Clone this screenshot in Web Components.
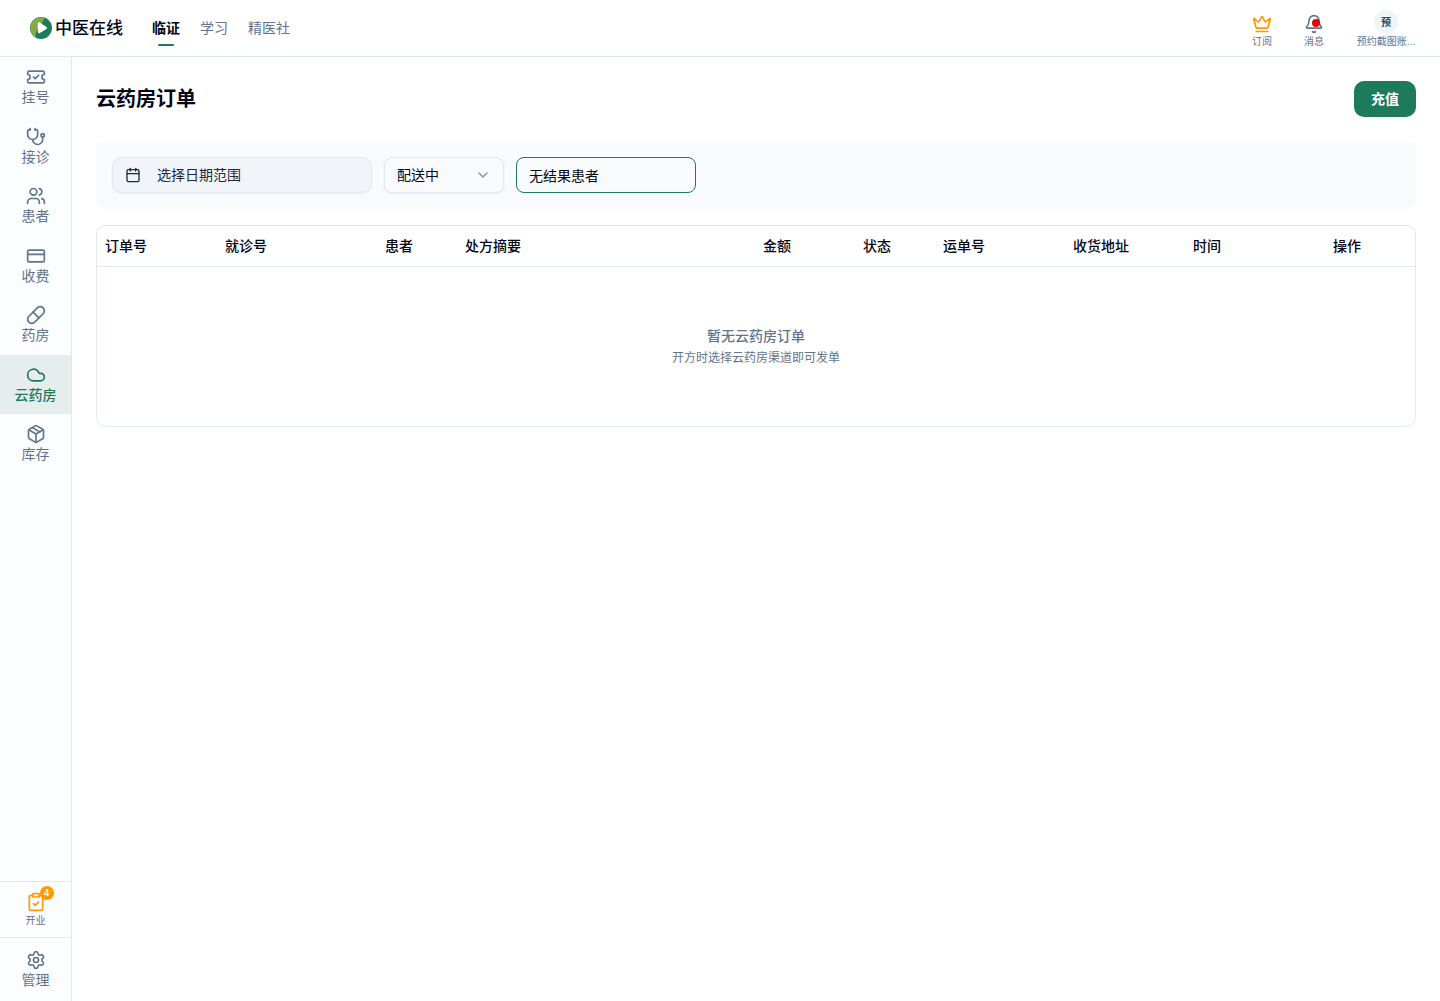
<!DOCTYPE html>
<html lang="zh-CN">
<head>
<meta charset="utf-8">
<meta name="viewport" content="width=device-width, initial-scale=1">
<title>云药房订单</title>
<style>
:root {
    --text: #020618;
    --muted: #62748e;
    --line: #e2e8f0;
    --panel: #f8fafc;
    --field: #f1f5f9;
    --side: #fbfdfe;
    --green: #1d7a5a;
    --orange: #fe9a00;
}

body {
    margin: 0;
    background: #fff;
    color: var(--text);
    font-family: Inter, "Noto Sans CJK SC", sans-serif;
    font-size: 14px;
    line-height: 20px;
}
</style>
</head>
<body>

<app-shell>
    <app-header slot="header">
        <nav-link active>临证</nav-link>
        <nav-link>学习</nav-link>
        <nav-link>精医社</nav-link>
        <header-tool slot="tools" label="订阅"><app-icon name="crown" style="color: var(--orange)"></app-icon></header-tool>
        <header-tool slot="tools" label="消息" dot><app-icon name="bell"></app-icon></header-tool>
        <header-tool slot="tools" label="预约截图账…" wide><user-avatar>预</user-avatar></header-tool>
    </app-header>

    <side-bar slot="side">
        <side-item icon="ticket">挂号</side-item>
        <side-item icon="stethoscope">接诊</side-item>
        <side-item icon="users">患者</side-item>
        <side-item icon="card">收费</side-item>
        <side-item icon="pill">药房</side-item>
        <side-item icon="cloud" active>云药房</side-item>
        <side-item icon="package">库存</side-item>
        <side-item slot="bottom" icon="clipboard" badge="4" small>开业</side-item>
        <side-item slot="bottom" icon="settings">管理</side-item>
    </side-bar>

    <page-title heading="云药房订单">
        <primary-button>充值</primary-button>
    </page-title>
    <filter-bar>
        <date-range>选择日期范围</date-range>
        <status-select></status-select>
        <search-input value="无结果患者"></search-input>
    </filter-bar>
    <order-table>
        <span slot="empty-title">暂无云药房订单</span>
        <span slot="empty-hint">开方时选择云药房渠道即可发单</span>
    </order-table>
</app-shell>

<script>
const ICONS = {
    crown: `<path d="M11.562 3.266a.5.5 0 0 1 .876 0L15.39 8.87a1 1 0 0 0 1.516.294L21.183 5.5a.5.5 0 0 1 .798.519l-2.834 10.246a1 1 0 0 1-.956.734H5.81a1 1 0 0 1-.957-.734L2.02 6.02a.5.5 0 0 1 .798-.519l4.276 3.664a1 1 0 0 0 1.516-.294z"/><path d="M5 21h14"/>`,
    bell: `<path d="M10.268 21a2 2 0 0 0 3.464 0"/><path d="M3.262 15.326A1 1 0 0 0 4 17h16a1 1 0 0 0 .74-1.673C19.41 13.956 18 12.499 18 8A6 6 0 0 0 6 8c0 4.499-1.411 5.956-2.738 7.326"/>`,
    ticket: `<path d="M2 9a3 3 0 0 1 0 6v2a2 2 0 0 0 2 2h16a2 2 0 0 0 2-2v-2a3 3 0 0 1 0-6V7a2 2 0 0 0-2-2H4a2 2 0 0 0-2 2Z"/><path d="m9 12 2 2 4-4"/>`,
    stethoscope: `<path d="M11 2v2"/><path d="M5 2v2"/><path d="M5 3H4a2 2 0 0 0-2 2v4a6 6 0 0 0 12 0V5a2 2 0 0 0-2-2h-1"/><path d="M8 15a6 6 0 0 0 12 0v-3"/><circle cx="20" cy="10" r="2"/>`,
    users: `<path d="M16 21v-2a4 4 0 0 0-4-4H6a4 4 0 0 0-4 4v2"/><path d="M16 3.128a4 4 0 0 1 0 7.744"/><path d="M22 21v-2a4 4 0 0 0-3-3.87"/><circle cx="9" cy="7" r="4"/>`,
    card: `<rect width="20" height="14" x="2" y="5" rx="2"/><path d="M2 10h20"/>`,
    pill: `<path d="m10.5 20.5 10-10a4.95 4.95 0 1 0-7-7l-10 10a4.95 4.95 0 1 0 7 7Z"/><path d="m8.5 8.5 7 7"/>`,
    cloud: `<path d="M17.5 19H9a7 7 0 1 1 6.71-9h1.79a4.5 4.5 0 1 1 0 9Z"/>`,
    package: `<path d="M11 21.73a2 2 0 0 0 2 0l7-4A2 2 0 0 0 21 16V8a2 2 0 0 0-1-1.73l-7-4a2 2 0 0 0-2 0l-7 4A2 2 0 0 0 3 8v8a2 2 0 0 0 1 1.73z"/><path d="M12 22V12"/><path d="M3.29 7 12 12l8.71-5"/><path d="m7.5 4.27 9 5.15"/>`,
    clipboard: `<rect width="8" height="4" x="8" y="2" rx="1"/><path d="M16 4h2a2 2 0 0 1 2 2v14a2 2 0 0 1-2 2H6a2 2 0 0 1-2-2V6a2 2 0 0 1 2-2h2"/><path d="m9 14 2 2 4-4"/>`,
    settings: `<path d="M9.671 4.136a2.34 2.34 0 0 1 4.659 0 2.34 2.34 0 0 0 3.319 1.915 2.34 2.34 0 0 1 2.33 4.033 2.34 2.34 0 0 0 0 3.831 2.34 2.34 0 0 1-2.33 4.033 2.34 2.34 0 0 0-3.319 1.915 2.34 2.34 0 0 1-4.659 0 2.34 2.34 0 0 0-3.32-1.915 2.34 2.34 0 0 1-2.33-4.033 2.34 2.34 0 0 0 0-3.831A2.34 2.34 0 0 1 6.35 6.051a2.34 2.34 0 0 0 3.319-1.915"/><circle cx="12" cy="12" r="3"/>`,
    calendar: `<path d="M8 2v4"/><path d="M16 2v4"/><rect width="18" height="18" x="3" y="4" rx="2"/><path d="M3 10h18"/>`,
    chevron: `<path d="m6 9 6 6 6-6"/>`
};

// Small base class: every element renders once into an open root
class BaseElement extends HTMLElement {

    constructor() {
        super();
        this.root = this.attachShadow({mode: "open"});
    }

    connectedCallback() {
        this.root.innerHTML = this.render();
    }
}

class AppIcon extends BaseElement {
    render() {
        return `
        <style>
        :host { display: block; width: 20px; height: 20px; }
        :host([small]) { width: 16px; height: 16px; }
        svg { display: block; width: 100%; height: 100%; }
        </style>
        <svg viewBox="0 0 24 24" fill="none" stroke="currentColor" stroke-width="2"
             stroke-linecap="round" stroke-linejoin="round" aria-hidden="true">${ICONS[this.getAttribute("name")]}</svg>`;
    }
}

class AppShell extends BaseElement {
    render() {
        return `
        <style>
        :host {
            display: grid;
            grid-template: auto 1fr / 72px 1fr;
            min-height: 100vh;
        }
        .header { grid-column: 1 / -1; }
        .side { display: grid; }
        main {
            display: flex;
            flex-direction: column;
            gap: 16px;
            min-width: 0;
            padding: 24px;
        }
        </style>
        <div class="header"><slot name="header"></slot></div>
        <div class="side"><slot name="side"></slot></div>
        <main><slot></slot></main>`;
    }
}

class AppHeader extends BaseElement {
    render() {
        return `
        <style>
        :host {
            display: flex;
            align-items: center;
            height: 56px;
            padding: 0 16px 0 30px;
            border-bottom: 1px solid var(--line);
        }
        .logo {
            display: flex;
            align-items: center;
            gap: 3px;
            margin-right: 29px;
            color: inherit;
            font-size: 17px;
            font-weight: 500;
            line-height: 24px;
            text-decoration: none;
        }
        .logo svg { width: 22px; height: 22px; }
        nav { display: flex; gap: 20px; }
        .tools { display: flex; gap: 16px; margin-left: auto; padding-top: 2px; }
        </style>
        <a class="logo" href="#">
            <svg viewBox="0 0 22 22" aria-hidden="true">
                <circle cx="11" cy="11" r="11" fill="#1d7a5a"/>
                <path d="M15 .8A11 11 0 0 0 6 20.800Q5 16.500 7 13L12 10Q11.500 4.500 15 .8Z" fill="#84ad45"/>
                <path d="M7.800 6.500Q7.800 4.500 9.600 5.500L16.500 9.900Q17.900 10.900 16.500 12L9.800 16Q7.800 16.900 7.800 14.800Z" fill="#fff"/>
            </svg>
            <span>中医在线</span>
        </a>
        <nav><slot></slot></nav>
        <div class="tools"><slot name="tools"></slot></div>`;
    }
}

class NavLink extends BaseElement {
    render() {
        return `
        <style>
        :host { display: block; }
        a {
            position: relative;
            display: block;
            padding: 8px 0;
            color: var(--muted);
            text-decoration: none;
        }
        :host([active]) a { color: var(--text); font-weight: 600; }
        :host([active]) a::after {
            content: "";
            position: absolute;
            bottom: 0;
            left: 6px;
            right: 6px;
            height: 2px;
            border-radius: 1px;
            background: var(--green);
        }
        </style>
        <a href="#"><slot></slot></a>`;
    }
}

class HeaderTool extends BaseElement {
    render() {
        return `
        <style>
        :host { display: block; }
        button {
            display: grid;
            grid-template-rows: 24px 14px;
            justify-items: center;
            align-items: end;
            padding: 0 8px;
            border: 0;
            background: none;
            color: var(--muted);
            font: inherit;
            font-size: 10px;
            line-height: 14px;
            cursor: pointer;
        }
        :host([wide]) button { min-width: 76px; }
        .icon { position: relative; }
        :host([dot]) .icon::after {
            content: "";
            position: absolute;
            top: 5px;
            right: 4px;
            width: 8px;
            height: 8px;
            border-radius: 50%;
            background: #e7000b;
        }
        </style>
        <button type="button">
            <span class="icon"><slot></slot></span>
            <span>${this.getAttribute("label")}</span>
        </button>`;
    }
}

class UserAvatar extends BaseElement {
    render() {
        return `
        <style>
        :host {
            display: grid;
            place-items: center;
            width: 24px;
            height: 24px;
            border-radius: 50%;
            background: var(--field);
            color: #314158;
            font-weight: 600;
        }
        </style>
        <slot></slot>`;
    }
}

class SideBar extends BaseElement {
    render() {
        return `
        <style>
        :host {
            display: flex;
            flex-direction: column;
            justify-content: space-between;
            border-right: 1px solid var(--line);
            background: var(--side);
        }
        nav {
            display: grid;
            grid-auto-rows: 1fr;
            min-height: 417px;
        }
        ::slotted([slot="bottom"]) { border-top: 1px solid var(--line); }
        ::slotted([slot="bottom"]:last-child) { padding: 2px 0 1px; }
        </style>
        <nav><slot></slot></nav>
        <div><slot name="bottom"></slot></div>`;
    }
}

class SideItem extends BaseElement {
    render() {
        const badge = this.getAttribute("badge");
        return `
        <style>
        :host { display: block; }
        a {
            display: flex;
            flex-direction: column;
            align-items: center;
            padding-top: 10px;
            color: var(--muted);
            text-decoration: none;
        }
        :host([slot]) a { padding-bottom: 10px; }
        :host([active]) { background: #e5eeec; }
        :host([active]) a { color: var(--green); font-weight: 500; }
        :host([small]) a { padding-bottom: 9px; font-size: 10px; line-height: 16px; }
        :host([small]) .icon { color: var(--orange); }
        .icon { position: relative; }
        .badge {
            position: absolute;
            top: -6px;
            right: -8px;
            width: 14px;
            border-radius: 50%;
            background: var(--orange);
            color: #fff;
            font-size: 9px;
            font-weight: 600;
            line-height: 14px;
            text-align: center;
        }
        </style>
        <a href="#">
            <span class="icon">
                <app-icon name="${this.getAttribute("icon")}"></app-icon>
                ${badge ? `<span class="badge">${badge}</span>` : ""}
            </span>
            <slot></slot>
        </a>`;
    }
}

class PageTitle extends BaseElement {
    render() {
        return `
        <style>
        :host {
            display: flex;
            align-items: center;
            justify-content: space-between;
            margin-bottom: 8px;
        }
        h1 { margin: 0; font-size: 20px; font-weight: 600; line-height: 30px; }
        </style>
        <h1>${this.getAttribute("heading")}</h1>
        <slot></slot>`;
    }
}

class PrimaryButton extends BaseElement {
    render() {
        return `
        <style>
        :host { display: block; }
        button {
            height: 36px;
            padding: 0 17px;
            border: 0;
            border-radius: 10px;
            background: var(--green);
            color: #fff;
            font: inherit;
            font-weight: 600;
            cursor: pointer;
        }
        </style>
        <button type="button"><slot></slot></button>`;
    }
}

class FilterBar extends BaseElement {
    render() {
        return `
        <style>
        :host {
            display: flex;
            flex-wrap: wrap;
            gap: 12px;
            padding: 16px;
            border-radius: 10px;
            background: var(--panel);
        }
        </style>
        <slot></slot>`;
    }
}

class DateRange extends BaseElement {
    render() {
        return `
        <style>
        :host { display: block; width: 260px; }
        button {
            display: flex;
            align-items: center;
            gap: 16px;
            box-sizing: border-box;
            width: 100%;
            height: 36px;
            padding: 0 12px;
            border: 1px solid var(--line);
            border-radius: 10px;
            background: var(--field);
            box-shadow: 0 1px 2px rgba(0, 0, 0, 0.05);
            color: #1d293d;
            font: inherit;
            cursor: pointer;
        }
        </style>
        <button type="button"><app-icon name="calendar" small></app-icon><slot></slot></button>`;
    }
}

class StatusSelect extends BaseElement {
    render() {
        return `
        <style>
        :host { display: grid; align-items: center; width: 120px; }
        select, app-icon { grid-area: 1 / 1; }
        select {
            appearance: none;
            box-sizing: border-box;
            width: 100%;
            height: 36px;
            padding: 0 12px;
            border: 1px solid var(--line);
            border-radius: 8px;
            background: var(--panel);
            box-shadow: 0 1px 2px rgba(0, 0, 0, 0.05);
            color: var(--text);
            font: inherit;
        }
        app-icon {
            justify-self: end;
            margin-right: 13px;
            color: #8290a5;
            pointer-events: none;
        }
        </style>
        <select aria-label="状态">
            <option>配送中</option>
        </select>
        <app-icon name="chevron" small></app-icon>`;
    }
}

class SearchInput extends BaseElement {
    render() {
        return `
        <style>
        :host { display: block; width: 180px; }
        input {
            box-sizing: border-box;
            width: 100%;
            height: 36px;
            padding: 0 12px;
            border: 1px solid var(--green);
            border-radius: 8px;
            outline: 0;
            background: var(--panel);
            color: var(--text);
            font: inherit;
        }
        </style>
        <input type="text" aria-label="患者" value="${this.getAttribute("value")}">`;
    }
}

class OrderTable extends BaseElement {
    render() {
        // The summary column has no width and takes what is left
        const columns = [
            ["订单号", 120], ["就诊号", 160], ["患者", 80], ["处方摘要"], ["金额", 100],
            ["状态", 80], ["运单号", 130], ["收货地址", 120], ["时间", 140], ["操作", 90]
        ];
        return `
        <style>
        :host {
            display: block;
            border: 1px solid var(--line);
            border-radius: 10px;
            overflow: hidden;
        }
        table {
            width: 100%;
            table-layout: fixed;
            border-spacing: 0;
        }
        th {
            padding: 10px 8px;
            border-bottom: 1px solid var(--line);
            font-weight: 500;
            text-align: left;
        }
        td {
            padding: 59px 8px 58px;
            color: var(--muted);
            text-align: center;
        }
        strong { display: block; font-weight: 500; }
        p { margin: 2px 0 0; font-size: 12px; }
        </style>
        <table>
            <colgroup>${columns.map(([, width]) => `<col${width ? ` style="width: ${width}px"` : ""}>`).join("")}</colgroup>
            <thead><tr>${columns.map(([name]) => `<th scope="col">${name}</th>`).join("")}</tr></thead>
            <tbody>
                <tr>
                    <td colspan="${columns.length}">
                        <strong><slot name="empty-title"></slot></strong>
                        <p><slot name="empty-hint"></slot></p>
                    </td>
                </tr>
            </tbody>
        </table>`;
    }
}

customElements.define("app-icon", AppIcon);
customElements.define("app-shell", AppShell);
customElements.define("app-header", AppHeader);
customElements.define("nav-link", NavLink);
customElements.define("header-tool", HeaderTool);
customElements.define("user-avatar", UserAvatar);
customElements.define("side-bar", SideBar);
customElements.define("side-item", SideItem);
customElements.define("page-title", PageTitle);
customElements.define("primary-button", PrimaryButton);
customElements.define("filter-bar", FilterBar);
customElements.define("date-range", DateRange);
customElements.define("status-select", StatusSelect);
customElements.define("search-input", SearchInput);
customElements.define("order-table", OrderTable);
</script>
</body>
</html>
